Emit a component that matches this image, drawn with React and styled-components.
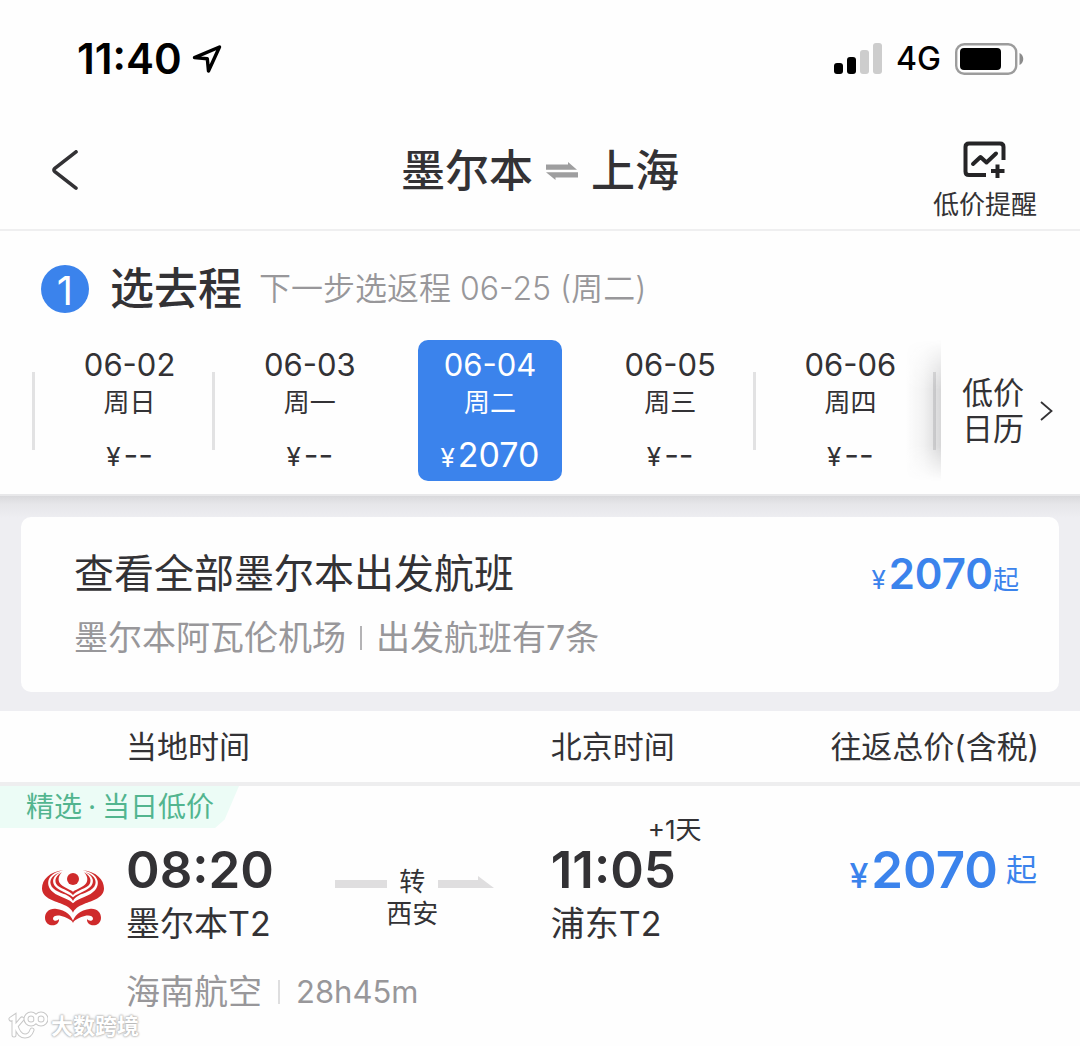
import React from "react";
import styled, { createGlobalStyle, css } from "styled-components";

const ink = "#333235";
const blue = "#3b83ec";
const muted = "#98979a";

const GlobalStyle = createGlobalStyle`
  * { box-sizing: border-box; }
  body {
    margin: 0;
    background: #fefefe;
    color: ${ink};
    font-family: Inter, "Noto Sans CJK SC", sans-serif;
    font-size: 31px;
    -webkit-font-smoothing: antialiased;
  }
  button {
    margin: 0;
    padding: 0;
    border: 0;
    background: none;
    color: inherit;
    font: inherit;
    cursor: pointer;
  }
`;

const Page = styled.main`
  position: relative;
  padding-bottom: 30px;
`;

const StatusBar = styled.div`
  display: flex;
  align-items: center;
  justify-content: space-between;
  height: 120px;
  padding: 0 56px 2px 77px;
  color: #000;
`;

const StatusGroup = styled.div`
  display: flex;
  align-items: center;
  gap: ${(p) => p.$gap}px;
`;

const Clock = styled.time`
  font-size: 42px;
  font-weight: 600;
  line-height: 48px;
`;

const Network = styled.span`
  font-size: 32px;
  font-weight: 500;
  line-height: 40px;
`;

const NavBar = styled.header`
  display: grid;
  grid-template-columns: 1fr auto 1fr;
  align-items: center;
  height: 111px;
  padding: 0 43px 7px;
  border-bottom: 2px solid #efeff0;
`;

const BackButton = styled.button`
  justify-self: start;
  display: flex;
  padding: 8px;
`;

const Route = styled.h1`
  display: flex;
  align-items: center;
  gap: 13px;
  margin: 0;
  font-size: 44px;
  font-weight: 500;
  line-height: 52px;
`;

const AlertButton = styled.button`
  justify-self: end;
  display: flex;
  flex-direction: column;
  align-items: center;
  gap: 10px;
  padding-top: 20px;
  font-size: 26px;
  line-height: 34px;
`;

const DateSection = styled.section`
  padding: 32px 0 13px;
  border-bottom: 2px solid #e8e8ea;
`;

const StepTitle = styled.div`
  display: flex;
  align-items: center;
  gap: 17px;
  padding-left: 41px;
  margin-bottom: 25px;
  line-height: 52px;
`;

const StepNumber = styled.span`
  display: grid;
  place-items: center;
  width: 48px;
  height: 48px;
  margin-right: 4px;
  border-radius: 50%;
  background: ${blue};
  color: #fff;
  font-size: 40px;
`;

const StepName = styled.h2`
  margin: 0;
  font-size: 44px;
  font-weight: 500;
`;

const StepHint = styled.span`
  color: ${muted};
  font-size: 32px;
  font-weight: 350;
`;

const DateBar = styled.div`
  display: flex;
  align-items: stretch;
  padding-left: 32px;
`;

const DateList = styled.div`
  position: relative;
  flex: 1;
  display: grid;
  grid-template-columns: repeat(5, 1fr) 8px;
  &::after {
    content: "";
    position: absolute;
    top: 0;
    right: 0;
    bottom: 0;
    width: 36px;
    background: linear-gradient(to left, rgba(60, 60, 66, 0.2), rgba(60, 60, 66, 0.06) 50%, transparent);
    mask-image: linear-gradient(transparent, #000 35%, #000 75%, transparent);
    pointer-events: none;
  }
`;

const DateCell = styled.div`
  display: flex;
  align-items: center;
  &::before {
    content: "";
    width: 3px;
    height: 78px;
    background: ${(p) => (p.$plain ? "transparent" : "#e2e2e3")};
  }
`;

const DateButton = styled.button`
  flex: 1;
  margin: 0 11px 0 23px;
  padding: 8px 0 9px;
  border-radius: 10px;
  text-align: center;
  line-height: 34px;
  ${(p) =>
    p.$selected &&
    css`
      background: ${blue};
      color: #fff;
    `}
`;

const DateLine = styled.span`
  display: block;
`;

const Weekday = styled.span`
  display: block;
  margin: 4px 0 18px;
  font-size: 26px;
`;

const Fare = styled.span`
  display: flex;
  align-items: baseline;
  justify-content: center;
  height: 34px;
  font-size: ${(p) => (p.$filled ? 34 : 32)}px;
`;

const Yen = styled.span`
  margin-right: 3px;
  font-size: ${(p) => p.$size || 26}px;
  font-weight: ${(p) => p.$weight || 400};
`;

const CalendarButton = styled.button`
  display: flex;
  align-items: center;
  gap: 16px;
  padding: 0 27px 0 21px;
  line-height: 36px;
`;

const CardArea = styled.section`
  padding: 21px 21px 19px;
  background: #eeeef2 linear-gradient(#d9d9dc, #e6e6e9 8px, #eeeef2 22px);
`;

const AirportCard = styled.a`
  display: block;
  padding: 31px 40px 32px 53px;
  border-radius: 10px;
  background: #fefefe;
  color: inherit;
  text-decoration: none;
`;

const CardTop = styled.div`
  display: flex;
  align-items: center;
  justify-content: space-between;
  height: 52px;
  margin-bottom: 16px;
  font-size: 40px;
  line-height: 52px;
`;

const CardSub = styled.div`
  display: flex;
  align-items: center;
  gap: 14px;
  color: ${muted};
  font-size: 34px;
  line-height: 44px;
`;

const Divider = styled.span`
  width: 2px;
  height: 24px;
  background: ${(p) => p.$color || "#b4b3b5"};
`;

const Price = styled.span`
  display: inline-flex;
  align-items: baseline;
  height: 52px;
  color: ${blue};
  font-size: ${(p) => p.$size}px;
  font-weight: 600;
  line-height: 52px;
  white-space: nowrap;
`;

const From = styled.span`
  align-self: ${(p) => (p.$centered ? "center" : "baseline")};
  margin-left: ${(p) => (p.$centered ? 8 : 0)}px;
  font-size: ${(p) => p.$size}px;
  font-weight: 400;
`;

const Flights = styled.table`
  width: 100%;
  table-layout: fixed;
  border-collapse: separate;
  border-spacing: 0;
  th, td {
    padding: 0;
    text-align: left;
    vertical-align: top;
  }
`;

const HeadCell = styled.th`
  width: ${(p) => p.$width};
  && {
    height: 75px;
    padding-left: ${(p) => p.$left || 0}px;
    padding-right: ${(p) => p.$right || 0}px;
    border-bottom: 4px solid #eeeeef;
    text-align: ${(p) => p.$align || "left"};
    vertical-align: middle;
    font-weight: 400;
    line-height: 40px;
  }
`;

const Tag = styled.span`
  display: block;
  width: 239px;
  padding-left: 26px;
  background: #ecfcf6;
  clip-path: polygon(0 0, 100% 0, 94% 80%, 90% 100%, 0 100%);
  color: #52b58f;
  font-size: 28px;
  line-height: 42px;
`;

const TagDot = styled.span`
  margin: 0 6px;
`;

const Departure = styled.div`
  display: flex;
  align-items: flex-start;
  padding: 16px 57px 0 42px;
`;

const LogoBox = styled.span`
  display: flex;
  width: 84px;
  padding-top: 26px;
`;

const Stop = styled.div`
  position: relative;
  flex: ${(p) => (p.$grow ? 1 : "none")};
  margin-top: ${(p) => p.$top || 0}px;
`;

const Time = styled.time`
  display: block;
  margin-bottom: 8px;
  font-size: 51px;
  font-weight: 600;
  line-height: 52px;
`;

const Airport = styled.span`
  display: block;
  font-size: 34px;
  line-height: 40px;
`;

const NextDay = styled.span`
  position: absolute;
  bottom: 100%;
  left: 97px;
  font-size: 26px;
  line-height: 28px;
`;

const Transfer = styled.div`
  display: grid;
  grid-template-columns: 52px 51px 56px;
  justify-items: center;
  align-items: center;
  padding-top: 22px;
  font-size: 26px;
  line-height: 32px;
`;

const TransferCity = styled.span`
  grid-column: 2;
  white-space: nowrap;
`;

const Total = styled.div`
  display: flex;
  justify-content: flex-end;
  padding: 16px 43px 0 0;
`;

const Meta = styled.div`
  display: flex;
  align-items: center;
  gap: 16px;
  padding: 26px 0 0 126px;
  color: ${muted};
  line-height: 44px;
`;

const Airline = styled.span`
  font-size: 34px;
`;

const Watermark = styled.div`
  position: absolute;
  left: 8px;
  bottom: 0;
  display: flex;
  align-items: center;
  gap: 3px;
  color: #fff;
  font-size: 22px;
  font-weight: 700;
  line-height: 36px;
  text-shadow: 0 0 2px #aaa, 0 0 2px #bbb, 0 0 3px #ccc;
`;

const LocationIcon = () => (
  <svg width="30" height="30" viewBox="0 0 30 30" fill="none" stroke="#000" strokeWidth="3.4" strokeLinejoin="round" aria-hidden="true">
    <path d="M2.5 13.6 L27.5 3 L16.5 27 L15.3 14.7 Z" />
  </svg>
);

const SignalIcon = () => (
  <svg width="48" height="32" viewBox="0 0 48 32" aria-hidden="true">
    <rect x="0" y="20" width="9" height="11" rx="3" />
    <rect x="13" y="14" width="9" height="17" rx="3" />
    <rect x="26" y="7" width="9" height="24" rx="3" fill="#cdcdcd" />
    <rect x="39" y="0" width="9" height="31" rx="3" fill="#cdcdcd" />
  </svg>
);

const BatteryIcon = () => (
  <svg width="69" height="32" viewBox="0 0 69 32" aria-hidden="true">
    <rect x="1.2" y="1.2" width="60" height="29.6" rx="8" fill="none" stroke="#9c9c9c" strokeWidth="2.4" />
    <rect x="5" y="5" width="41" height="22" rx="4" />
    <path d="M64.5 10 C69.5 12 69.5 20 64.5 22 Z" fill="#8c8c8c" />
  </svg>
);

const BackIcon = () => (
  <svg width="28" height="42" viewBox="0 0 28 42" fill="none" stroke={ink} strokeWidth="3.6" strokeLinecap="round" strokeLinejoin="round" aria-hidden="true">
    <path d="M25 1.8 L3.8 18.4 Q2 20 3.8 21.6 L25 38.2" />
  </svg>
);

const SwapIcon = () => (
  <svg width="32" height="18" viewBox="0 0 32 18" fill="#9e9e9f" aria-hidden="true">
    <path d="M0 2.4 H22 V0 L31 7.8 H0 Z" />
    <path d="M32 15.6 H9.5 V18 L0 10.2 H32 Z" />
  </svg>
);

const AlertIcon = () => (
  <svg width="44" height="37" viewBox="0 0 44 37" fill="none" stroke="#252426" strokeWidth="4" aria-hidden="true">
    <path d="M40.5 19 V6 Q40.5 2.5 37 2.5 H6 Q2.5 2.5 2.5 6 V30.5 Q2.5 34 6 34 H23" />
    <path d="M10 23 L17.5 16 L23.5 21.5 L33 12.5" strokeLinecap="round" strokeLinejoin="round" />
    <path d="M34.5 23.5 V37 M28 30 H41.5" />
  </svg>
);

const ChevronIcon = () => (
  <svg width="13" height="20" viewBox="0 0 13 20" fill="none" stroke={ink} strokeWidth="1.8" aria-hidden="true">
    <path d="M1 1 L11.5 10 L1 19" />
  </svg>
);

const Wing = (props) => (
  <g {...props}>
    <path d="M190 303 C148 307 126 332 126 357 C126 386 160 394 186 404 C204 411 214 419 219 430 L219 402 C208 391 192 387 174 378 C152 367 142 352 145 335 C149 318 166 308 190 303 Z" />
    <path d="M184 308 C158 316 148 330 152 345 C158 366 188 371 203 379 C212 384 216 388 219 395 L219 384 C210 375 194 371 181 363 C164 354 157 343 160 330 C164 319 172 312 184 308 Z" />
    <path d="M186 309 C169 318 162 332 169 344 C178 359 206 361 219 377 L219 367 C206 358 188 354 179 341 C173 331 176 319 186 309 Z" />
    <path d="M221 460 C216 440 200 422 166 418 C146 417 135 430 135 445 C135 460 146 468 158 468 C170 468 178 460 177 449 C172 456 160 456 159 448 C159 439 172 437 184 440 C198 444 210 449 221 460 Z" />
  </g>
);

const AirlineLogo = () => (
  <svg width="62" height="56" viewBox="126 303 186 166" fill="#cf2a2b" role="img" aria-label="海南航空">
    <circle cx="219" cy="329" r="18" />
    <Wing />
    <Wing transform="matrix(-1 0 0 1 438 0)" />
  </svg>
);

const TransferBar = () => (
  <svg width="52" height="12" viewBox="0 0 52 12" aria-hidden="true">
    <rect y="4" width="52" height="8" fill="#dfdedf" />
  </svg>
);

const TransferArrow = () => (
  <svg width="56" height="12" viewBox="0 0 56 12" aria-hidden="true">
    <path d="M0 4 H40 V0 L56 12 H0 Z" fill="#dfdedf" />
  </svg>
);

const MarkIcon = () => (
  <svg width="40" height="32" viewBox="0 0 40 32" fill="none" strokeLinecap="round" aria-hidden="true">
    {[
      ["#c8c8c8", 5],
      ["#ffffff", 3],
    ].map(([color, width]) => (
      <g key={color} stroke={color} strokeWidth={width}>
        <path d="M3 9 L6 7 V25 M14 9 L8 16 Q11 26 17 26 Q22 26 24 20" />
        <circle cx="23" cy="9" r="5" />
        <circle cx="33" cy="9" r="5" />
      </g>
    ))}
  </svg>
);

const days = [
  { date: "06-02", weekday: "周日" },
  { date: "06-03", weekday: "周一" },
  { date: "06-04", weekday: "周二", fare: "2070" },
  { date: "06-05", weekday: "周三" },
  { date: "06-06", weekday: "周四" },
];
const selected = 2;

export default function App() {
  return (
    <>
      <GlobalStyle />
      <Page>
        <StatusBar>
          <StatusGroup $gap={10}>
            <Clock>11:40</Clock>
            <LocationIcon />
          </StatusGroup>
          <StatusGroup $gap={14}>
            <SignalIcon />
            <Network>4G</Network>
            <BatteryIcon />
          </StatusGroup>
        </StatusBar>

        <NavBar>
          <BackButton aria-label="返回">
            <BackIcon />
          </BackButton>
          <Route>
            墨尔本
            <SwapIcon />
            上海
          </Route>
          <AlertButton>
            <AlertIcon />
            低价提醒
          </AlertButton>
        </NavBar>

        <DateSection>
          <StepTitle>
            <StepNumber>1</StepNumber>
            <StepName>选去程</StepName>
            <StepHint>下一步选返程 06-25 (周二)</StepHint>
          </StepTitle>
          <DateBar>
            <DateList>
              {days.map((day, i) => (
                <DateCell key={day.date} $plain={i === selected || i === selected + 1}>
                  <DateButton $selected={i === selected} aria-pressed={i === selected}>
                    <DateLine>{day.date}</DateLine>
                    <Weekday>{day.weekday}</Weekday>
                    <Fare $filled={Boolean(day.fare)}>
                      <Yen>¥</Yen>
                      {day.fare || "--"}
                    </Fare>
                  </DateButton>
                </DateCell>
              ))}
              <DateCell />
            </DateList>
            <CalendarButton>
              <span>
                低价
                <br />
                日历
              </span>
              <ChevronIcon />
            </CalendarButton>
          </DateBar>
        </DateSection>

        <CardArea>
          <AirportCard href="#flights">
            <CardTop>
              <span>查看全部墨尔本出发航班</span>
              <Price $size={42}>
                <Yen>¥</Yen>2070<From $size={26}>起</From>
              </Price>
            </CardTop>
            <CardSub>
              <span>墨尔本阿瓦伦机场</span>
              <Divider />
              <span>出发航班有7条</span>
            </CardSub>
          </AirportCard>
        </CardArea>

        <Flights id="flights">
          <thead>
            <tr>
              <HeadCell $width="51%" $left={126}>当地时间</HeadCell>
              <HeadCell $width="20%">北京时间</HeadCell>
              <HeadCell $width="29%" $align="right" $right={41}>往返总价(含税)</HeadCell>
            </tr>
          </thead>
          <tbody>
            <tr>
              <td colSpan={3}>
                <Tag>
                  精选<TagDot>·</TagDot>当日低价
                </Tag>
              </td>
            </tr>
            <tr>
              <td>
                <Departure>
                  <LogoBox>
                    <AirlineLogo />
                  </LogoBox>
                  <Stop $grow>
                    <Time>08:20</Time>
                    <Airport>墨尔本T2</Airport>
                  </Stop>
                  <Transfer>
                    <TransferBar />
                    <span>转</span>
                    <TransferArrow />
                    <TransferCity>西安</TransferCity>
                  </Transfer>
                </Departure>
              </td>
              <td>
                <Stop $top={16}>
                  <NextDay>+1天</NextDay>
                  <Time>11:05</Time>
                  <Airport>浦东T2</Airport>
                </Stop>
              </td>
              <td>
                <Total>
                  <Price $size={51}>
                    <Yen $size={34} $weight={500}>¥</Yen>2070<From $size={31} $centered>起</From>
                  </Price>
                </Total>
              </td>
            </tr>
            <tr>
              <td colSpan={3}>
                <Meta>
                  <Airline>海南航空</Airline>
                  <Divider $color="#dededf" />
                  <span>28h45m</span>
                </Meta>
              </td>
            </tr>
          </tbody>
        </Flights>

        <Watermark>
          <MarkIcon />
          大数跨境
        </Watermark>
      </Page>
    </>
  );
}
